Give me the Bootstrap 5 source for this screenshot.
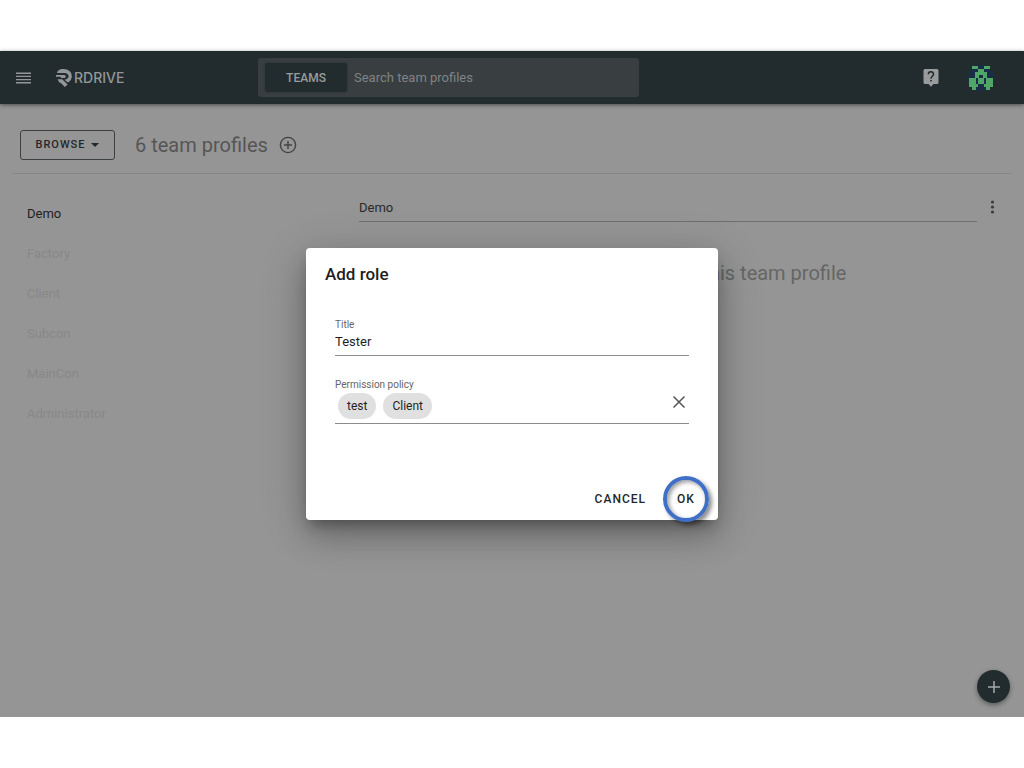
<!DOCTYPE html>
<html lang="en">
<head>
<meta charset="utf-8">
<meta name="viewport" content="width=device-width, initial-scale=1">
<title>RDrive – Team profiles</title>
<link href="https://cdn.jsdelivr.net/npm/bootstrap@5.3.0/dist/css/bootstrap.min.css" rel="stylesheet">
<style>
body { font-family: Roboto, "Liberation Sans", sans-serif; font-size: 13px; line-height: 20px; color: #1f1f1f; background: #fff; padding: 51px 0; }
.app { min-height: calc(100vh - 102px); background: #959595; }
.topbar { height: 53px; background: #222c2f; box-shadow: 0 1px 4px rgba(0,0,0,.5); color: #949797; padding: 0 29px 0 16px; }
.start { flex: 0 0 242px; }
.brand { color: #949797; font: 500 14px/20px Inter, sans-serif; }
.search { flex: 0 1 381px; height: 39px; background: #393e40; border-radius: 3px; padding: 0 7px; }
.scope { width: 82px; height: 29px; background: #222c2f; color: #999c9c; border: 0; border-radius: 3px; font-size: 12px; font-weight: 500; box-shadow: 0 0 2px #222c2f; }
.search input { background: none; border: 0; outline: 0; color: #868989; padding: 0 7px; }
.search input::placeholder { color: #808384; opacity: 1; }
.heading { height: 70px; margin: 0 13px; padding: 13px 7px 0; border-bottom: 1px solid #858585; }
.browse { height: 30px; width: 95px; border: 1px solid #3b4042; border-radius: 3px; background: none; color: #23282a; font-size: 11px; font-weight: 500; letter-spacing: 1px; }
.title { font-size: 20px; line-height: 28px; color: #555; margin: 0 10px 0 20px; font-weight: 400; }
.bare { border: 0; background: none; padding: 0; color: inherit; display: flex; }
.teams { width: 345px; padding: 30px 27px; }
.teams a { display: block; line-height: 20px; margin-bottom: 20px; color: #888; text-decoration: none; }
.teams a.current { color: #1f1f1f; }
.namebox { border: 0; border-bottom: 1px solid #6f6f6f; border-radius: 0; background: none; outline: 0; color: #2a2a2a; padding: 2px 0 0; height: 30px; }
.detail { padding: 18px 28px 0 14px; }
.empty { font-size: 20px; line-height: 28px; color: #666; padding-left: 8px; margin-top: 37px; }
.fab { right: 14px; bottom: 14px; width: 33px; height: 33px; background: #222c2f; color: #a5a9a9; box-shadow: 0 2px 5px rgba(0,0,0,.4); }
.overlay { inset: 0; }
.dialog { width: 412px; background: #fff; border-radius: 4px; padding: 16px 9px 0 19px; box-shadow: 0 8px 12px -4px rgba(0,0,0,.28), 0 16px 30px rgba(0,0,0,.22), 0 8px 50px rgba(0,0,0,.16); }
.dialog h2 { font-size: 17px; line-height: 20px; font-weight: 500; margin: 0 0 34px; }
.fields { padding: 0 20px 0 10px; margin-bottom: 52px; }
.fields label, .fields .caption { font-size: 10px; line-height: 14px; color: #666; display: block; }
.role { border: 0; border-bottom: 1px solid #8c8c8c; outline: 0; padding: 0 0 5px; margin-bottom: 22px; height: 24px; color: #1f1f1f; line-height: 19px; }
.policies { border-bottom: 1px solid #8c8c8c; padding: 1px 3px 4px; }
.chip { background: #e0e0e0; border-radius: 13px; font-size: 12px; line-height: 26px; padding: 0 9px; margin-right: 7px; }
.act { border: 0; background: none; color: #23282a; font-size: 12px; font-weight: 500; letter-spacing: 1px; }
.cancel { padding: 0 17px; }
.ring { width: 46px; height: 46px; border: 4px solid #3f6fc6; border-radius: 50%; padding: 0; box-shadow: 3px 3px 4px rgba(0,0,0,.45), inset 2px 2px 4px rgba(0,0,0,.4); }
.actions { margin-bottom: -2px; }
</style>
<script src="https://cdn.jsdelivr.net/npm/bootstrap@5.3.0/dist/js/bootstrap.bundle.min.js"></script>
</head>
<body>
<div class="app position-relative">
  <header class="topbar d-flex align-items-center">
    <div class="start d-flex align-items-center">
      <button class="bare" aria-label="Menu"><svg width="15" height="12" fill="currentColor"><path d="M0 .5h15v1.400H0zM0 3.700h15v1.400H0zM0 6.900h15v1.400H0zM0 10.100h15v1.400H0z"/></svg></button>
      <a href="#" class="brand d-flex align-items-center text-decoration-none ms-4"><svg width="19" height="20" viewBox="-1 0 19 20" fill="currentColor"><path d="M1.500 3.500C3 1.600 5 1 7.500 1c4.700 0 8.300 3 8.300 7.300 0 3-1.500 5.200-4 6.300l-3.200-2.900c2.400-.2 4-1.500 4-3.400 0-2-1.700-3.300-4.100-3.300H1z"/><path d="M0 7h8.200c2 0 2 3.100 0 3.100H5.500L4 8.800H0z"/><path d="M1.500 11.300h4.700l5.400 5.200-2.800 2.500-4.100-4.200H3.500z"/></svg><span>RDRIVE</span></a>
    </div>
    <div class="search d-flex align-items-center">
      <button class="scope">TEAMS</button>
      <input class="flex-grow-1" type="search" placeholder="Search team profiles" aria-label="Search team profiles">
    </div>
    <div class="d-flex align-items-center ms-auto">
      <button class="bare me-4 pe-1" aria-label="Help"><svg width="16" height="18"><path fill="#999c9c" d="M2 0h12q1.500 0 1.500 1.500v12q0 1.500-1.500 1.500h-3.500L8 17.800 5.500 15H2Q.5 15 .5 13.500v-12Q.5 0 2 0z"/><path d="M5.300 5.300c0-3.500 5.200-3.500 5.200 0C10.500 7.200 8 7.300 8 9.700" fill="none" stroke="#222c2f" stroke-width="1.500"/><path fill="#222c2f" d="M7.200 11h1.600v1.600H7.200z"/></svg></button>
      <button class="bare" aria-label="Account"><svg width="28" height="28" viewBox="-2 -2 28 28"><circle cx="12" cy="12" r="13" fill="#192e46"/><path fill="#50a569" shape-rendering="crispEdges" d="M3 0h6v3H3zM15 0h6v3h-6zM9 3h6v3H9zM6 6h12v3H6zM6 9h4v3H6zM14 9h4v3h-4zM0 12h7v9H0zM17 12h7v9h-7zM9 12h6v6H9zM6 18h3v3H6zM15 18h3v3h-3zM3 21h4v3H3zM17 21h4v3h-4z"/></svg></button>
    </div>
  </header>
  <div class="heading d-flex align-items-center">
    <button class="browse d-flex align-items-center justify-content-center">BROWSE<svg class="ms-1" width="10" height="6" fill="currentColor"><path d="M1 1h8L5 5z"/></svg></button>
    <h1 class="title">6 team profiles</h1>
    <button class="bare" aria-label="Add team profile"><svg width="19" height="18" fill="none" stroke="#424242" stroke-width="1.400"><circle cx="10" cy="9" r="7.600"/><path d="M10 5v8M6 9h8"/></svg></button>
  </div>
  <main class="d-flex">
    <nav class="teams flex-shrink-0" aria-label="Team profiles">
      <a href="#" class="current">Demo</a><a href="#">Factory</a><a href="#">Client</a><a href="#">Subcon</a><a href="#">MainCon</a><a href="#">Administrator</a>
    </nav>
    <section class="detail flex-grow-1">
      <div class="d-flex align-items-center">
        <input class="namebox flex-grow-1" value="Demo" aria-label="Profile name">
        <button class="bare ms-2 ps-1" aria-label="More"><svg width="7" height="16" fill="#3c3c3c"><circle cx="3.500" cy="3" r="1.600"/><circle cx="3.500" cy="8" r="1.600"/><circle cx="3.500" cy="13" r="1.600"/></svg></button>
      </div>
      <p class="empty text-center">There are no roles in this team profile</p>
    </section>
  </main>
  <button class="fab bare position-absolute rounded-circle align-items-center justify-content-center" aria-label="Add"><svg width="12" height="12" stroke="currentColor" stroke-width="1.500"><path d="M6 0v12M0 6h12"/></svg></button>
  <div class="overlay position-absolute d-flex align-items-center justify-content-center">
    <form class="dialog" role="dialog" aria-labelledby="dlg">
      <h2 id="dlg">Add role</h2>
      <div class="fields">
        <label for="role">Title</label>
        <input id="role" class="role w-100 d-block" value="Tester">
        <div class="caption">Permission policy</div>
        <div class="policies d-flex align-items-center">
          <span class="chip">test</span><span class="chip">Client</span>
          <button type="button" class="bare ms-auto mb-2" aria-label="Clear"><svg width="14" height="14" stroke="#555" stroke-width="1.500"><path d="M1.500 1.500l11 11M12.500 1.500l-11 11"/></svg></button>
        </div>
      </div>
      <div class="actions d-flex justify-content-end align-items-center">
        <button type="button" class="act cancel">CANCEL</button>
        <button type="button" class="act ring">OK</button>
      </div>
    </form>
  </div>
</div>
</body>
</html>
